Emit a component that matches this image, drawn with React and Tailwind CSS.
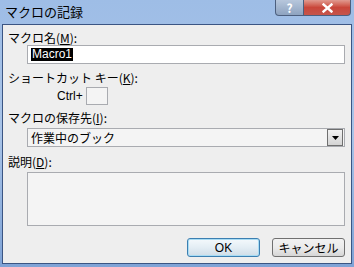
export default function App() {
  const font = { fontFamily: '"Noto Sans CJK JP", "Noto Sans", sans-serif' };
  return (
    <div
      className="w-[354px] h-[267px] flex flex-col bg-gradient-to-b from-[#9ebde6] via-[#a9c4e8] to-[#7fa3d6] text-[12px] leading-[14px] text-black overflow-hidden"
      style={font}
    >
      {/* title bar */}
      <div className="h-[24px] flex items-start shrink-0">
        <div className="pl-[5px] pt-[4px] text-[13px] leading-[16px] text-black">マクロの記録</div>
        <div className="ml-auto mr-[3px] flex">
          <div className="w-[29px] h-[16px] border border-[#4c5f7e] border-t-0 rounded-bl-[4px] bg-gradient-to-b from-[#b7c7dc] to-[#8ea3c0] flex items-center justify-center text-white text-[12px] font-bold leading-none">
            ?
          </div>
          <div className="w-[47px] h-[16px] border border-[#4c5f7e] border-t-0 border-l-0 rounded-br-[4px] bg-gradient-to-b from-[#e09a90] via-[#c9463a] to-[#c5554b] flex items-center justify-center">
            <svg width="11" height="10" viewBox="0 0 11 10">
              <path d="M1.5 1.5 L9.5 8.5 M9.5 1.5 L1.5 8.5" stroke="#fff" strokeWidth="2.4" strokeLinecap="square" />
            </svg>
          </div>
        </div>
      </div>

      {/* client area */}
      <div className="flex-1 mx-[2px] mb-[3px] border border-[#3b5583] bg-[#eeeeee] pl-[5px] pr-[6px] flex flex-col">
        <div className="mt-[6px] h-[14px]">
          マクロ名(<span className="underline">M</span>):
        </div>
        <div className="ml-[19px] h-[19px] border border-[#a9abb0] bg-white flex items-center pl-[3px]">
          <span className="bg-black text-white px-[1px] h-[13px] leading-[13px]" style={{ fontFamily: '"Liberation Sans", sans-serif' }}>
            Macro1
          </span>
        </div>
        <div className="mt-[7px] h-[14px]">
          ショートカット キー(<span className="underline">K</span>):
        </div>
        <div className="mt-[2px] h-[18px] flex items-center">
          <span className="ml-[49px] w-[24px]" style={{ fontFamily: '"Liberation Sans", sans-serif' }}>Ctrl+</span>
          <div className="ml-[5px] w-[22px] h-[18px] border border-[#a9abb0] bg-[#f4f4f4]" />
        </div>
        <div className="mt-[6px] h-[14px]">
          マクロの保存先(<span className="underline">I</span>):
        </div>
        <div className="mt-[3px] ml-[19px] h-[19px] border border-[#a9abb0] bg-[#f4f4f4] flex items-center pl-[3px] pr-[1px]">
          <span className="flex-1">作業中のブック</span>
          <div className="w-[16px] h-[17px] border border-[#6f6f6f] bg-gradient-to-b from-[#f2f2f2] to-[#d4d4d4] flex items-center justify-center">
            <svg width="7" height="4" viewBox="0 0 7 4">
              <path d="M0 0 H7 L3.5 4 Z" fill="#000" />
            </svg>
          </div>
        </div>
        <div className="mt-[8px] h-[14px]">
          説明(<span className="underline">D</span>):
        </div>
        <div className="mt-[3px] ml-[19px] h-[54px] border border-[#a9abb0] bg-[#f4f4f4]" />
        <div className="mt-[12px] flex justify-end gap-[12px]">
          <button className="w-[73px] h-[19px] border border-[#3c7fb1] rounded-[3px] bg-gradient-to-b from-[#f4f9fc] via-[#e3edf4] to-[#cfdde7] shadow-[inset_0_0_0_1px_#a8dcf4] text-[12px] leading-none" style={{ fontFamily: '"Liberation Sans", sans-serif' }}>
            OK
          </button>
          <button className="w-[73px] h-[19px] border border-[#707070] rounded-[3px] bg-gradient-to-b from-[#f2f2f2] via-[#ebebeb] to-[#d6d6d6] text-[12px] leading-none" style={font}>
            キャンセル
          </button>
        </div>
      </div>
    </div>
  );
}
